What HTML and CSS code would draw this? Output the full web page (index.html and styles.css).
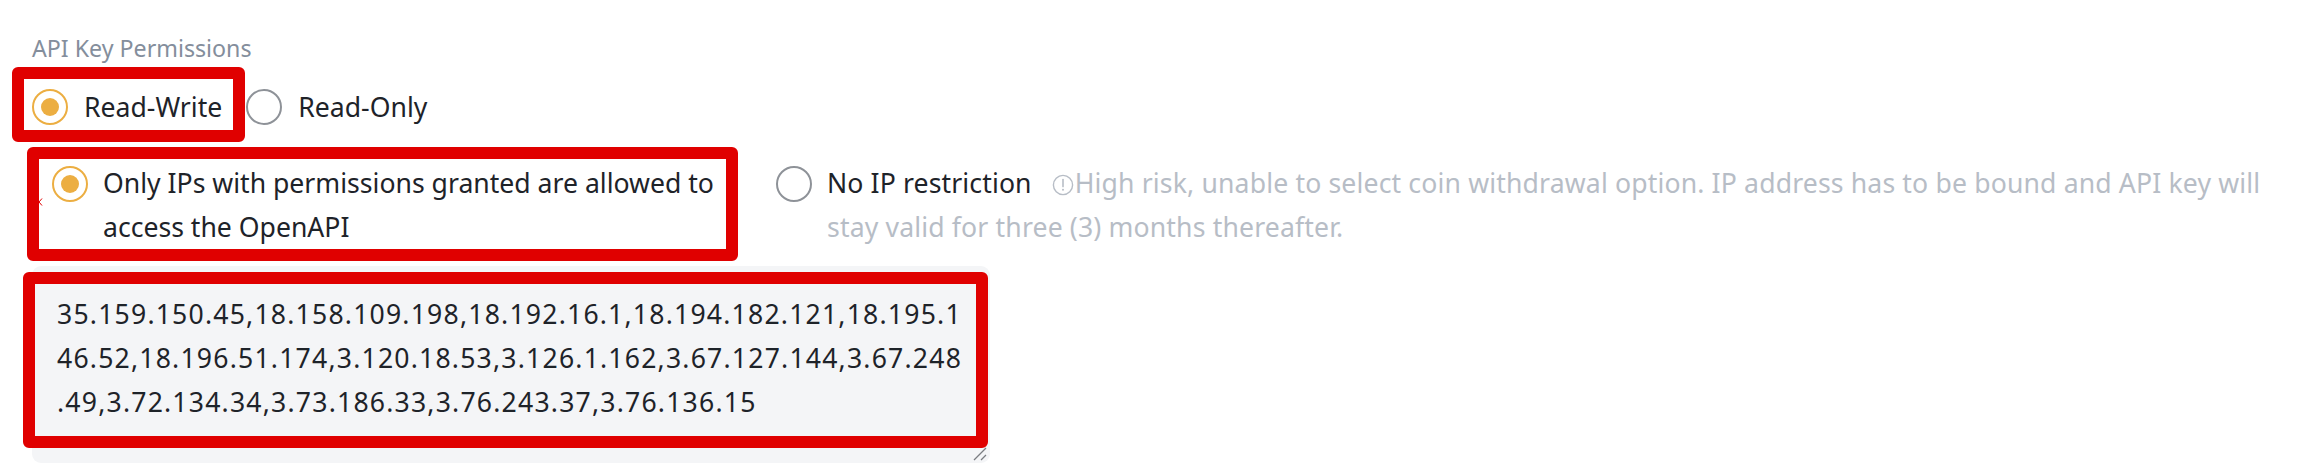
FILE: index.html
```html
<!DOCTYPE html>
<html lang="en">
<head>
<meta charset="utf-8">
<title>API Key Permissions</title>
<link rel="stylesheet" href="styles.css">
</head>
<body>
<div class="page">
  <div class="field-label">API Key Permissions</div>

  <div class="radio-group">
    <label class="radio-option is-checked hl hl-1">
      <span class="radio"></span>
      <span class="radio-text">Read-Write</span>
    </label>
    <label class="radio-option">
      <span class="radio"></span>
      <span class="radio-text">Read-Only</span>
    </label>
  </div>

  <div class="ip-row">
    <svg class="req-mark" width="5" height="8" viewBox="0 0 5 8"><path d="M4 0.5 L1 4 L4 7.5" fill="none" stroke="#e00000" stroke-width="1"/></svg>
    <label class="ip-option ip-option-limited is-checked hl hl-2">
      <span class="radio"></span>
      <span class="ip-text">Only IPs with permissions granted are allowed to access the OpenAPI</span>
    </label>
    <label class="ip-option ip-option-free">
      <span class="radio"></span>
      <span class="ip-text ip-text-free"><span class="opt-name">No IP restriction</span><span class="warn"><svg class="warn-icon" width="22" height="22" viewBox="0 0 22 22"><circle cx="11" cy="11" r="9.6" fill="none" stroke="#b7bdc6" stroke-width="1.4"/><path d="M11 5.6 V12.6" stroke="#b7bdc6" stroke-width="1.6" stroke-linecap="round"/><circle cx="11" cy="15.8" r="1" fill="#b7bdc6"/></svg>High risk, unable to select coin withdrawal option. IP address has to be bound and API key will stay valid for three (3) months thereafter.</span></span>
    </label>
  </div>

  <div class="ip-box hl hl-3">
    <div class="ip-list">
      <span class="ip-line">35.159.150.45,18.158.109.198,18.192.16.1,18.194.182.121,18.195.1</span>
      <span class="ip-line">46.52,18.196.51.174,3.120.18.53,3.126.1.162,3.67.127.144,3.67.248</span>
      <span class="ip-line">.49,3.72.134.34,3.73.186.33,3.76.243.37,3.76.136.15</span>
    </div>
    <svg class="resize-grip" width="16" height="16" viewBox="0 0 16 16"><path d="M2 14 L14 2 M9 14 L14 9" stroke="#7a7d82" stroke-width="1.3" fill="none"/></svg>
  </div>
</div>
</body>
</html>
```

FILE: styles.css
```css
* { box-sizing: border-box; }

html, body {
  margin: 0;
  padding: 0;
  background: #ffffff;
}

body {
  font-family: "Noto Sans", "Open Sans", sans-serif;
  color: #1e2329;
}

.page {
  padding: 32px 10px 0 32px;
}

.field-label {
  font-size: 23.2px;
  line-height: 32px;
  color: #848e9c;
}

.radio-group {
  display: flex;
  align-items: center;
  gap: 24px;
  margin-top: 21px;
}

.radio-option {
  display: flex;
  align-items: center;
  gap: 16px;
  font-size: 26.6px;
  line-height: 44px;
}

.radio {
  flex: none;
  position: relative;
  width: 36px;
  height: 36px;
  border: 2px solid #8e9298;
  border-radius: 50%;
  background: #ffffff;
}

.is-checked > .radio {
  border-color: #ecae42;
}

.is-checked > .radio::after {
  content: "";
  position: absolute;
  left: 50%;
  top: 50%;
  width: 18px;
  height: 18px;
  margin: -9px 0 0 -9px;
  border-radius: 50%;
  background: #ecae42;
}

.ip-row {
  display: flex;
  align-items: flex-start;
  margin-top: 32px;
  font-size: 26.6px;
  line-height: 44px;
}

.req-mark {
  flex: none;
  display: block;
  margin: 37px 9px 0 6px;
}

.ip-option {
  display: flex;
  align-items: flex-start;
  gap: 15px;
}

.ip-option > .radio {
  margin-top: 5px;
}

.ip-option-limited {
  flex: none;
  margin-right: 33px;
}

.ip-option-limited .ip-text {
  width: 640px;
}

.ip-option-free {
  flex: 1;
  min-width: 0;
}

.ip-text-free {
  flex: 1;
  min-width: 0;
}

.opt-name {
  letter-spacing: 0.12px;
}

.warn {
  color: #b7bdc6;
  margin-left: 20px;
  letter-spacing: 0.15px;
}

.warn-icon {
  display: inline-block;
  vertical-align: -3px;
  margin-right: 1px;
}

.ip-box {
  position: relative;
  margin-top: 17px;
  width: 958px;
  height: 197px;
  padding: 26px 20px 0 25px;
  background: #f4f5f7;
  border-radius: 9px;
}

.ip-list {
  font-size: 26.6px;
  line-height: 44px;
  letter-spacing: 1.2px;
  color: #1e2329;
}

.ip-line {
  display: block;
  white-space: nowrap;
}

.resize-grip {
  position: absolute;
  right: 2px;
  bottom: 1px;
}

/* red annotation frames drawn over the screenshot */
.hl {
  position: relative;
}

.hl::before {
  content: "";
  position: absolute;
  border: 12px solid #e00000;
  border-radius: 6px;
  pointer-events: none;
  z-index: 2;
}

.hl-1::before {
  left: -20px;
  right: -23px;
  top: -18px;
  bottom: -13px;
}

.hl-2::before {
  left: -25px;
  right: 5px;
  top: -14px;
  bottom: -12px;
}

.hl-3::before {
  left: -9px;
  right: 2px;
  top: 6px;
  bottom: 15px;
}
```
